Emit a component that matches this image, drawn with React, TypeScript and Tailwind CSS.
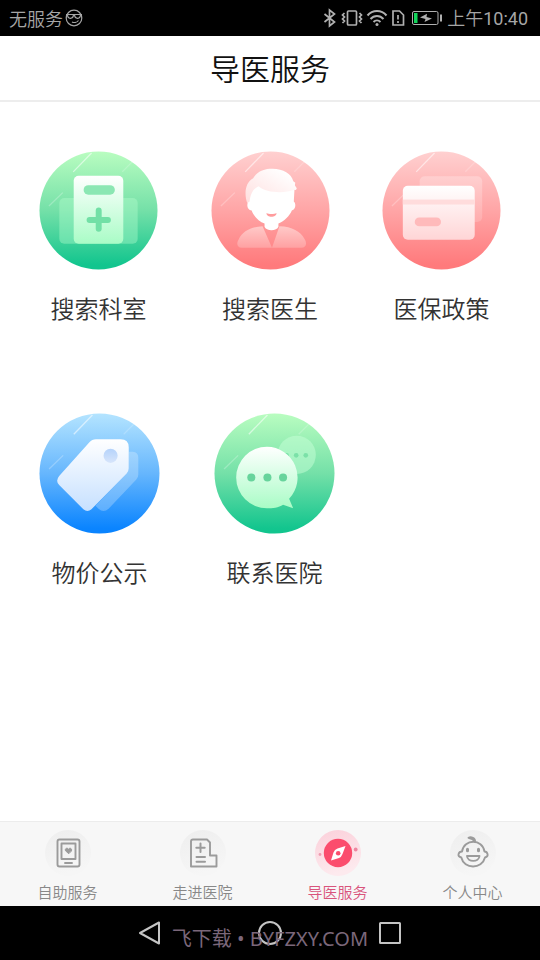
import type { ReactNode } from "react";

const FONT = "font-['Noto_Sans_CJK_SC',sans-serif]";

type Gradient = { id: string; from: string; mid: string; to: string };

const GREEN: Gradient = { id: "green", from: "#b9fdc0", mid: "#74e0a8", to: "#12c58e" };
const PINK: Gradient = { id: "pink", from: "#ffd0d0", mid: "#ffa5a6", to: "#ff7a7c" };
const BLUE: Gradient = { id: "blue", from: "#b4e4ff", mid: "#66b6fd", to: "#0a84ff" };

function Disc({ name, tone, size, children }: { name: string; tone: Gradient; size: string; children: ReactNode }) {
  const fill = `${name}-${tone.id}`;
  return (
    <svg className={size} viewBox="0 0 120 120" fill="none" aria-hidden="true">
      <defs>
        <linearGradient id={fill} x1="0" y1="0" x2="0" y2="1">
          <stop offset="0" stopColor={tone.from} />
          <stop offset="0.5" stopColor={tone.mid} />
          <stop offset="0.96" stopColor={tone.to} />
        </linearGradient>
      </defs>
      <circle cx="60" cy="60" r="59.5" fill={`url(#${fill})`} />
      <path d="M34.5 21 L53 2" stroke="#fff" strokeOpacity="0.55" strokeWidth="1.3" />
      <path d="M10 55.5 L24 42" stroke="#fff" strokeOpacity="0.25" strokeWidth="1.3" />
      <path d="M84 21 L94 11" stroke="#fff" strokeOpacity="0.2" strokeWidth="1.3" />
      {children}
    </svg>
  );
}

function DepartmentIcon() {
  return (
    <Disc name="dept" tone={GREEN} size="size-[119px]">
      <defs>
        <linearGradient id="dept-card" x1="0" y1="0" x2="0" y2="1">
          <stop offset="0" stopColor="#fff" />
          <stop offset="1" stopColor="#a9fcc6" />
        </linearGradient>
      </defs>
      <rect x="20.5" y="47.5" width="79" height="46" rx="5" fill="#b7ffd0" fillOpacity="0.38" />
      <rect x="35" y="25" width="50" height="68.5" rx="5" fill="url(#dept-card)" />
      <rect x="45" y="34.5" width="31.5" height="9.5" rx="4.75" fill="#8be7b3" />
      <path d="M60.2 60 V78.500 M51 69.500 H69.500" stroke="#72e0a6" strokeWidth="6" strokeLinecap="round" />
    </Disc>
  );
}

function DoctorIcon() {
  return (
    <Disc name="doc" tone={PINK} size="size-[119px]">
      <defs>
        <linearGradient id="doc-hair" x1="0.8" y1="0.1" x2="0" y2="1">
          <stop offset="0" stopColor="#fff" />
          <stop offset="1" stopColor="#ffdede" />
        </linearGradient>
        <linearGradient id="doc-coat" x1="0" y1="0" x2="0" y2="1">
          <stop offset="0" stopColor="#ffc9c8" />
          <stop offset="1" stopColor="#ffa1a2" />
        </linearGradient>
      </defs>
      <path
        d="M52 76 L61.500 97.500 H31 C26 97.500 25.500 93 28 89 C32 81 40 76.500 52 76 Z M69 76 C82 76.500 90 81 94.500 89 C97 93 96 97.500 91 97.500 H61.500 Z"
        fill="url(#doc-coat)"
      />
      <path
        d="M40 34 L37.500 51 C35.500 55 37 59.500 41 60 C42.500 65 48 71 54 73 V76.500 C55.500 81 66.500 81 68 76.500 V73 C74 71 79.500 65 81.500 60 C85.500 59 86 53 83.500 51 L84.500 33 Z"
        fill="#fff"
      />
      <path
        d="M36.500 52.500 C33.500 44 34 32 42.500 27.500 C47 20 54 18 62 18 C73 18 81 23 83 30.500 L85 32 L84.500 34.500 L86.500 37.500 C86 39.500 84.500 39.500 84 39 C74 43 56 42.500 48 35.500 C42 38 39.500 44 39 51 Z"
        fill="url(#doc-hair)"
      />
      <path d="M56 62.500 C58 64 64 64 66 62.500 C66.500 67.500 55.500 67.500 56 62.500 Z" fill="#ff9c9d" />
    </Disc>
  );
}

function InsuranceIcon() {
  return (
    <Disc name="ins" tone={PINK} size="size-[119px]">
      <defs>
        <linearGradient id="ins-card" x1="0" y1="0" x2="0" y2="1">
          <stop offset="0" stopColor="#fff" />
          <stop offset="1" stopColor="#ffd5d6" />
        </linearGradient>
        <linearGradient id="ins-back" x1="0" y1="0" x2="0" y2="1">
          <stop offset="0" stopColor="#fff" stopOpacity="0.26" />
          <stop offset="1" stopColor="#fff" stopOpacity="0.16" />
        </linearGradient>
      </defs>
      <rect x="38" y="25.500" width="63" height="46" rx="5" fill="url(#ins-back)" />
      <rect x="21" y="35" width="72.500" height="54.500" rx="5" fill="url(#ins-card)" />
      <rect x="21" y="49" width="72.500" height="5" fill="#ffdcdc" />
      <rect x="33" y="67" width="26.500" height="9" rx="4.500" fill="#ffbabb" />
    </Disc>
  );
}

function PriceIcon() {
  return (
    <Disc name="price" tone={BLUE} size="size-[121px]">
      <defs>
        <linearGradient id="price-tag" x1="0" y1="0" x2="0" y2="1">
          <stop offset="0" stopColor="#fff" />
          <stop offset="1" stopColor="#c6e0ff" />
        </linearGradient>
        <linearGradient id="price-hole" x1="0" y1="0" x2="0" y2="1">
          <stop offset="0" stopColor="#b5d3fb" />
          <stop offset="1" stopColor="#d7e5fb" />
        </linearGradient>
      </defs>
      <path
        d="M89 38.500 H93 Q98.500 39 98.500 44.500 V61 Q98.500 64 96.500 66 L69 95 Q64 99.500 59 95 L56 92 L87 60 Q89 58 89 55 Z"
        fill="#fff"
        fillOpacity="0.25"
      />
      <path
        d="M56.500 26 H81 Q89 26 89 34 V55 Q89 58 87 60 L52 95.500 Q48 99 44 95.500 L20 71.500 Q16 67.500 20 62.500 L50 29 Q52.500 26 56.500 26 Z"
        fill="url(#price-tag)"
      />
      <circle cx="71" cy="42.500" r="7" fill="url(#price-hole)" />
    </Disc>
  );
}

function ContactIcon() {
  return (
    <Disc name="contact" tone={GREEN} size="size-[121px]">
      <defs>
        <linearGradient id="contact-bubble" x1="0" y1="0" x2="0" y2="1">
          <stop offset="0" stopColor="#fff" />
          <stop offset="1" stopColor="#a9fcc6" />
        </linearGradient>
      </defs>
      <circle cx="82" cy="41.500" r="19" fill="#c8ffd8" fillOpacity="0.5" />
      <g fill="#7be1a8">
        <circle cx="72" cy="42" r="2.300" />
        <circle cx="81.500" cy="42" r="2.300" />
        <circle cx="91" cy="42" r="2.300" />
      </g>
      <path
        d="M52.500 33.500 A30.500 30.500 0 0 1 74.500 85 L78.500 94.500 L68.500 91 C64 94 58 94.500 52.500 94.500 A30.500 30.500 0 0 1 52.500 33.500 Z"
        fill="url(#contact-bubble)"
      />
      <g fill="#67d49c">
        <circle cx="37" cy="64" r="4" />
        <circle cx="53" cy="64" r="4" />
        <circle cx="68.500" cy="64" r="4" />
      </g>
    </Disc>
  );
}

function TabDisc({ active, children }: { active?: boolean; children: ReactNode }) {
  return (
    <svg
      className="size-[46px]"
      viewBox="0 0 46 46"
      fill="none"
      stroke={active ? "none" : "#9b9b9b"}
      strokeWidth="1.9"
      strokeLinejoin="round"
      strokeLinecap="round"
      aria-hidden="true"
    >
      <defs>
        <linearGradient id={active ? "tab-on" : "tab-off"} x1="0" y1="0" x2="0.3" y2="1">
          <stop offset="0" stopColor={active ? "#fbd0da" : "#eeeeee"} />
          <stop offset="1" stopColor={active ? "#fdeaee" : "#f6f6f6"} />
        </linearGradient>
      </defs>
      <circle cx="23" cy="23" r="23" fill={active ? "url(#tab-on)" : "url(#tab-off)"} stroke="none" />
      {children}
    </svg>
  );
}

const SERVICE_ROWS = [
  {
    style: "justify-between",
    items: [
      { label: "搜索科室", icon: <DepartmentIcon /> },
      { label: "搜索医生", icon: <DoctorIcon /> },
      { label: "医保政策", icon: <InsuranceIcon /> },
    ],
  },
  {
    style: "gap-[54px]",
    items: [
      { label: "物价公示", icon: <PriceIcon /> },
      { label: "联系医院", icon: <ContactIcon /> },
    ],
  },
];

const TABS = [
  {
    label: "自助服务",
    active: false,
    icon: (
      <TabDisc>
        <rect x="12.500" y="9.500" width="22" height="27" rx="2" />
        <rect x="16.500" y="13.500" width="14" height="15.500" />
        <path d="M20 33 H27" />
        <path d="M23.500 23.500 L20.500 20.800 C19.500 18.300 22.500 17.300 23.500 19.300 C24.500 17.300 27.500 18.300 26.500 20.800 Z" fill="#9b9b9b" strokeWidth="1" />
      </TabDisc>
    ),
  },
  {
    label: "走进医院",
    active: false,
    icon: (
      <TabDisc>
        <path d="M11 36.500 V11.500 Q11 9.500 13 9.500 H27 L30 12.500 V25.500 H36.500 V36.500 Z" />
        <path d="M20.500 13.500 V22 M16.300 17.800 H24.700 M16.500 27 H25 M16.500 31.800 H25" strokeWidth="2" />
      </TabDisc>
    ),
  },
  {
    label: "导医服务",
    active: true,
    icon: (
      <TabDisc active>
        <circle cx="23" cy="23" r="14.200" fill="#fb4d6d" />
        <path d="M30.500 16 L27.500 24 Q26.500 27 24 28 L16 30.500 L18.500 22.500 Q19.500 19.500 22.500 18.500 Z" fill="#fff" />
        <circle cx="23.200" cy="23.200" r="2.300" fill="#fb4d6d" />
        <circle cx="5" cy="24.500" r="1.400" fill="#ee9bb0" />
        <circle cx="40.700" cy="19.500" r="1.900" fill="#ee86a0" />
      </TabDisc>
    ),
  },
  {
    label: "个人中心",
    active: false,
    icon: (
      <TabDisc>
        <path d="M12 21.500 C14 8.500 32.500 8.500 34.500 21.500 C37.500 21.500 39.500 26.500 35 27.500 C32 39.500 14 39.500 11.300 27.500 C6.500 26.500 8.500 21.500 12 21.500 Z" />
        <path d="M18.500 7.800 C21 6.600 25.500 8 25 11.500 C23.500 9.500 21.500 8.500 18.500 7.800 Z" />
        <path d="M17 26 H29.500 C29 32.500 17.500 32.500 17 26 Z" />
        <path d="M17.500 19.300 V20.700 M28.500 19.300 V20.700" strokeWidth="3" />
      </TabDisc>
    ),
  },
];

function StatusBar() {
  return (
    <div className="flex h-9 items-center justify-between bg-black pr-3 pl-[9px] text-lg leading-none font-[350] text-[#a6a6a6]">
      <div className="flex items-center gap-0.5">
        <span>无服务</span>
        <svg className="size-[18px]" viewBox="0 0 18 18" fill="none" stroke="#a6a6a6" strokeWidth="1.2" aria-hidden="true">
          <circle cx="9" cy="9" r="7.800" />
          <path d="M1 5.500 H17 M2.500 5.500 C2.500 10.500 8 10.500 8.500 6 M9.500 6 C10 10.500 15.500 10.500 15.500 5.500 M7 13 C9 14 12 13.500 13.500 11.500" />
        </svg>
      </div>
      <div className="flex items-center gap-1">
        <svg className="h-5 w-[123px]" viewBox="0 0 123 20" fill="none" stroke="#b0b0b0" strokeWidth="1.700" aria-hidden="true">
          <path d="M4.500 6 L14.500 14 L9.500 18 V2 L14.500 6 L4.500 14" />
          <rect x="27.500" y="3" width="9" height="14" rx="1" />
          <path d="M24.500 5 L22.500 7 L24.500 9 L22.500 11 L24.500 13 L22.500 15 M39.500 5 L41.500 7 L39.500 9 L41.500 11 L39.500 13 L41.500 15" />
          <path d="M47.500 7.500 C52.500 1.500 61.500 1.500 66.500 7.500 M50.500 11 C54 7 60 7 63.500 11 M53.500 14 C55.500 12 58.500 12 60.500 14" strokeWidth="2" />
          <circle cx="57" cy="16.500" r="1.500" fill="#b0b0b0" stroke="none" />
          <path d="M73 3 H79.500 L83.500 7 V17 H73 Z M78 7 V11.500 M78 13 V15" />
          <rect x="92.500" y="3.500" width="25.500" height="13" rx="1.500" strokeWidth="1" />
          <rect x="94" y="5" width="3.500" height="10" fill="#12d45a" stroke="none" />
          <path d="M100 9.500 L107 5.800 L106.500 9 L112 10.500 L104.500 14 L105.500 11 Z" fill="#b0b0b0" stroke="none" />
          <path d="M121 6.500 V13.500" strokeWidth="2" />
        </svg>
        <span>
          上午<span className="font-[Roboto,sans-serif] font-normal">10:40</span>
        </span>
      </div>
    </div>
  );
}

function SystemNav() {
  return (
    <div className="relative h-[54px] bg-black">
      <div className="flex h-full items-center justify-center gap-24">
        <button type="button" aria-label="返回">
          <svg className="size-6" viewBox="0 0 24 24" fill="none" stroke="#c4c4c4" strokeWidth="2" strokeLinejoin="round" aria-hidden="true">
            <path d="M21 1.500 V22.500 L2 12 Z" />
          </svg>
        </button>
        <button type="button" aria-label="主页">
          <svg className="size-6" viewBox="0 0 24 24" fill="none" stroke="#c4c4c4" strokeWidth="2" aria-hidden="true">
            <circle cx="12" cy="12" r="11" />
          </svg>
        </button>
        <button type="button" aria-label="最近任务">
          <svg className="size-6" viewBox="0 0 24 24" fill="none" stroke="#c4c4c4" strokeWidth="2" aria-hidden="true">
            <rect x="2" y="2" width="20" height="20" rx="0.500" />
          </svg>
        </button>
      </div>
      <p className="pointer-events-none absolute inset-x-0 top-[21px] text-center font-['Noto_Sans','Noto_Sans_CJK_SC',sans-serif] text-xl leading-6 text-[#7b677a]">
        飞下载 • BYFZXY.COM
      </p>
    </div>
  );
}

export default function App() {
  return (
    <div className={`flex min-h-screen flex-col bg-white ${FONT}`}>
      <StatusBar />
      <header className="flex h-[66px] items-center justify-center border-b-2 border-[#ededed]">
        <h1 className="pb-0.5 text-3xl font-[350] text-[#111]">导医服务</h1>
      </header>
      <main className="flex flex-1 flex-col gap-[87px] px-[39px] pt-[49px]">
        {SERVICE_ROWS.map((row) => (
          <div key={row.style} className={`flex ${row.style}`}>
            {row.items.map((item) => (
              <button key={item.label} type="button" className="flex flex-col items-center gap-5">
                {item.icon}
                <span className="text-2xl leading-9 font-[350] text-[#333]">{item.label}</span>
              </button>
            ))}
          </div>
        ))}
      </main>
      <nav className="flex h-[85px] border-t border-[#ececec] bg-[#f7f7f7] pt-2">
        {TABS.map((tab) => (
          <button
            key={tab.label}
            type="button"
            aria-current={tab.active ? "page" : undefined}
            className="flex flex-1 flex-col items-center gap-1.5"
          >
            {tab.icon}
            <span className={`text-[15px] leading-5 font-[350] ${tab.active ? "text-[#d9547c]" : "text-[#888]"}`}>
              {tab.label}
            </span>
          </button>
        ))}
      </nav>
      <SystemNav />
    </div>
  );
}
